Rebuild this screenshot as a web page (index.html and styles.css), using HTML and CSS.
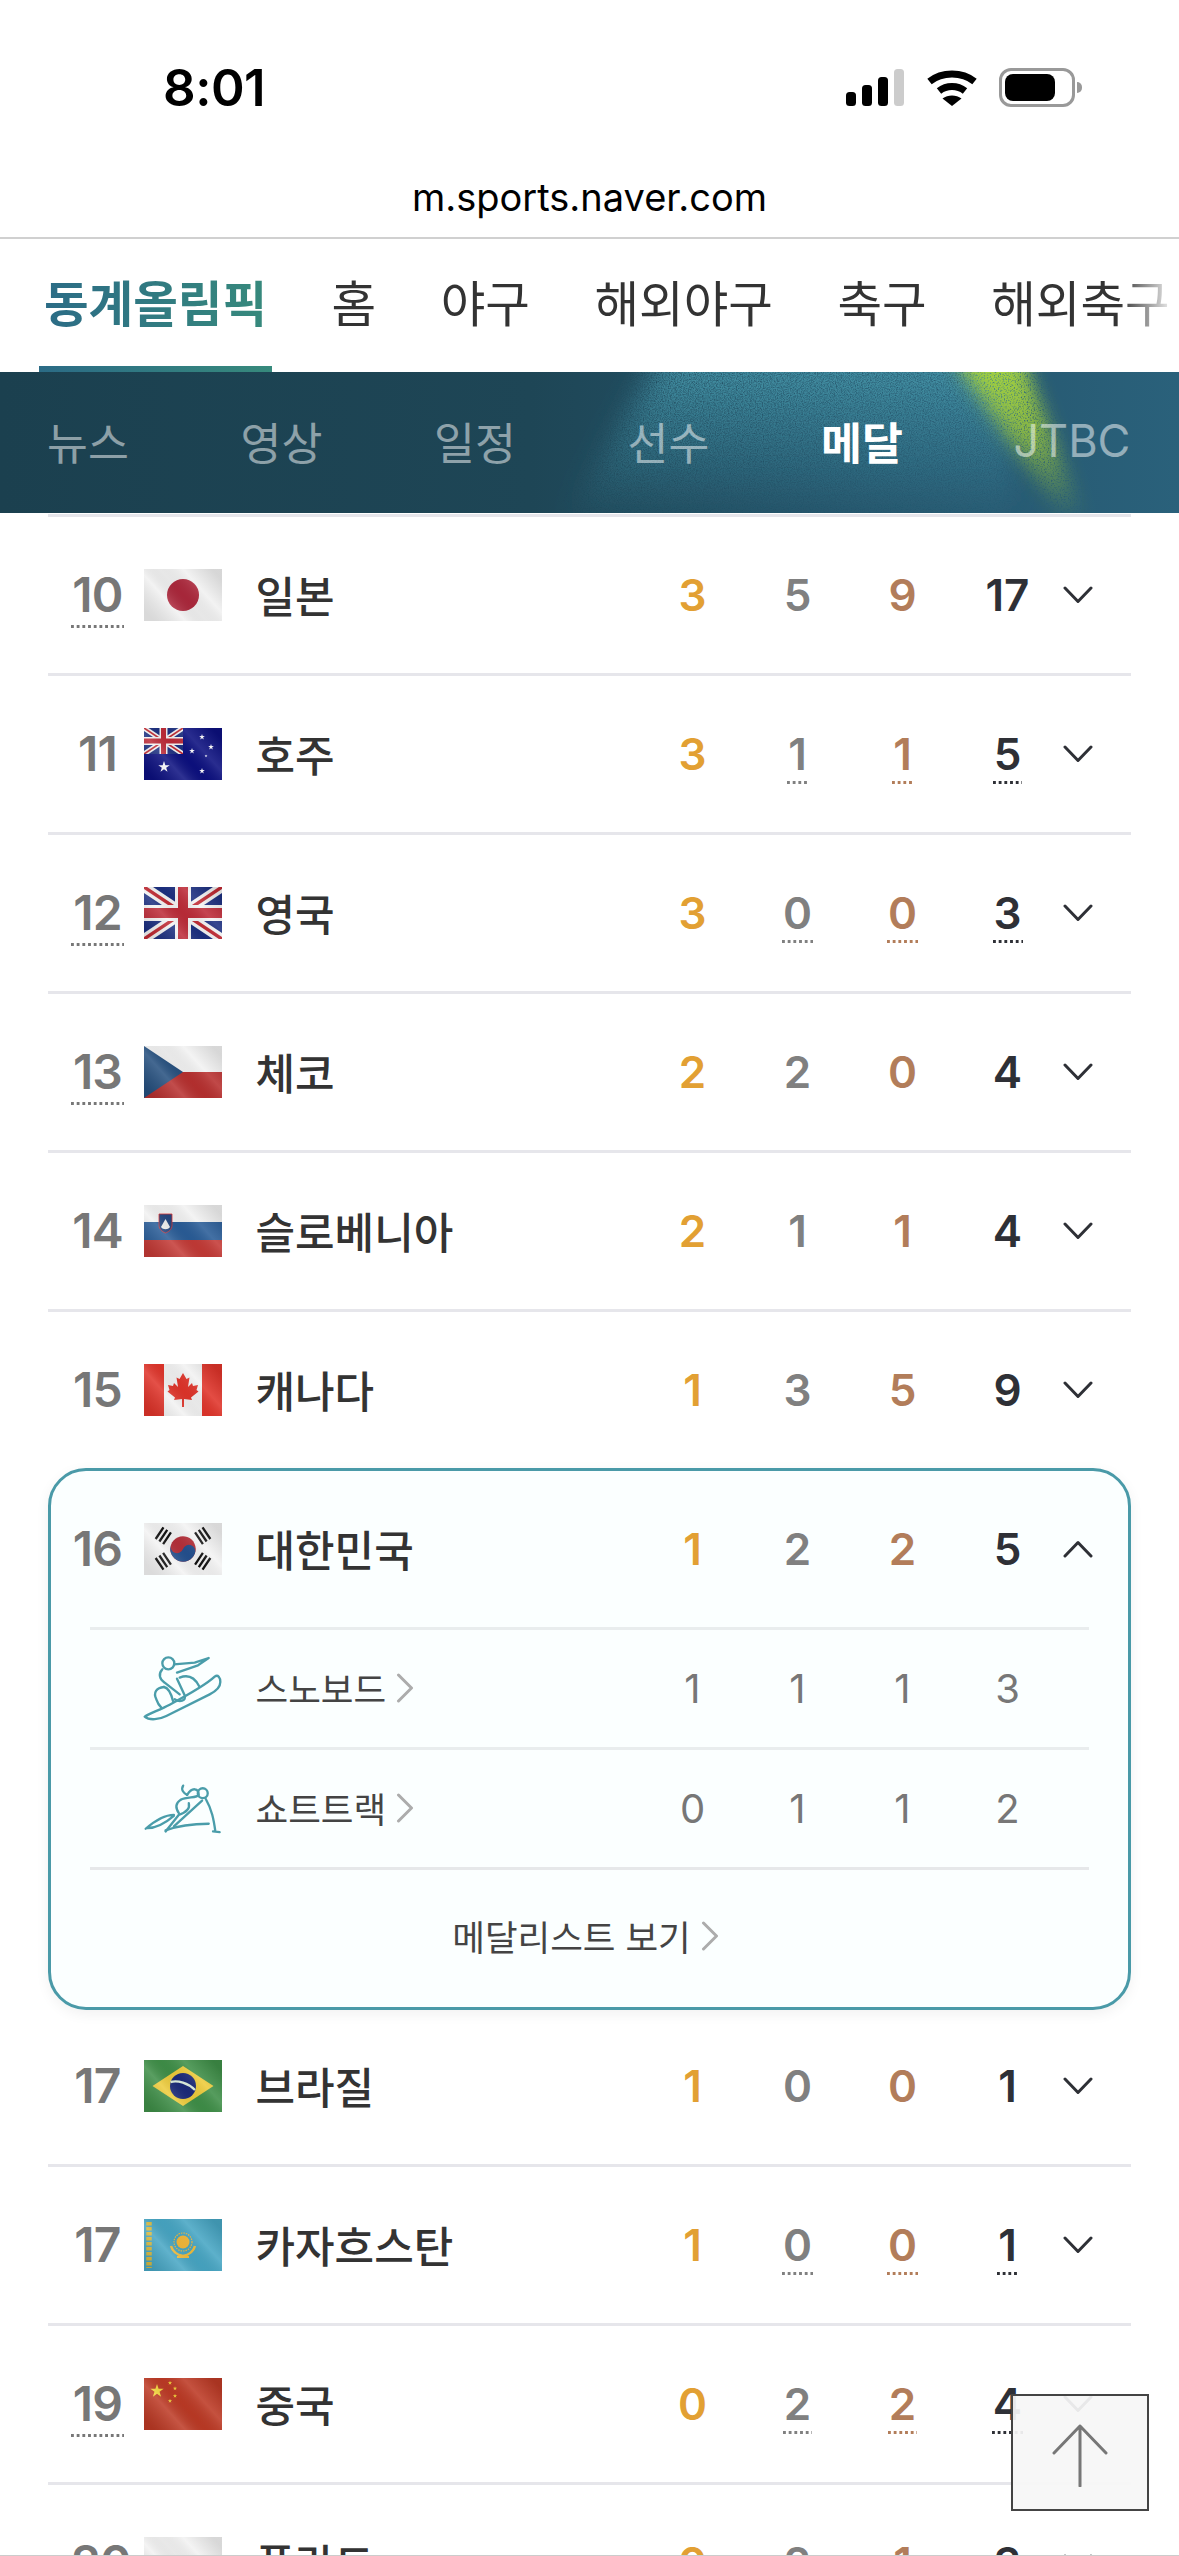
FILE: index.html
```html
<!DOCTYPE html>
<html lang="ko">
<head>
<meta charset="utf-8">
<title>동계올림픽 메달</title>
<link rel="stylesheet" href="styles.css">
</head>
<body>
<svg class="defs" aria-hidden="true">
  <defs>
    <linearGradient id="gloss" gradientUnits="userSpaceOnUse" x1="10" y1="52" x2="68" y2="0">
      <stop offset="0" stop-color="#000" stop-opacity=".1"/>
      <stop offset=".3" stop-color="#fff" stop-opacity=".14"/>
      <stop offset=".5" stop-color="#000" stop-opacity=".04"/>
      <stop offset=".72" stop-color="#fff" stop-opacity=".12"/>
      <stop offset="1" stop-color="#000" stop-opacity=".11"/>
    </linearGradient>
    <linearGradient id="tealBeam" x1="0" y1="0" x2="0" y2="1">
      <stop offset="0" stop-color="#4a9db0" stop-opacity=".95"/>
      <stop offset=".6" stop-color="#3f8ea3" stop-opacity=".45"/>
      <stop offset="1" stop-color="#3f8ea3" stop-opacity="0"/>
    </linearGradient>
    <linearGradient id="limeBeam" x1="0" y1="0" x2="0" y2="1">
      <stop offset="0" stop-color="#a9d63c"/>
      <stop offset=".5" stop-color="#9cc83a" stop-opacity=".8"/>
      <stop offset="1" stop-color="#8cb83a" stop-opacity="0"/>
    </linearGradient>
    <filter id="grainSoft" x="-20%" y="-20%" width="140%" height="140%">
      <feGaussianBlur in="SourceGraphic" stdDeviation="14" result="soft"/>
      <feTurbulence type="fractalNoise" baseFrequency=".85" numOctaves="2" seed="4"/>
      <feColorMatrix type="matrix" values="0 0 0 0 0  0 0 0 0 0  0 0 0 0 0  1.8 0 0 0 -.15" result="noise"/>
      <feComposite in="soft" in2="noise" operator="in"/>
    </filter>
    <filter id="grainLime" x="-30%" y="-20%" width="160%" height="140%">
      <feGaussianBlur in="SourceGraphic" stdDeviation="9" result="soft"/>
      <feTurbulence type="fractalNoise" baseFrequency=".7" numOctaves="2" seed="9"/>
      <feColorMatrix type="matrix" values="0 0 0 0 0  0 0 0 0 0  0 0 0 0 0  2.400 0 0 0 -.25" result="noise"/>
      <feComposite in="soft" in2="noise" operator="in"/>
    </filter>
    <polygon id="star" points="0,-1 .225,-.309 .951,-.309 .363,.118 .588,.809 0,.382 -.588,.809 -.363,.118 -.951,-.309 -.225,-.309"/>
    <symbol id="jack" viewBox="0 0 78 52">
      <rect width="78" height="52" fill="#1c2f80"/>
      <path d="M0 0L78 52M78 0L0 52" stroke="#f4f4f4" stroke-width="10"/>
      <path d="M0 0L78 52M78 0L0 52" stroke="#c12a33" stroke-width="3.4"/>
      <path d="M39 0V52M0 26H78" stroke="#f4f4f4" stroke-width="16"/>
      <path d="M39 0V52M0 26H78" stroke="#bd2b38" stroke-width="10"/>
    </symbol>
    <symbol id="chevDown" viewBox="0 0 30 18">
      <path d="M2 2L15 15.500L28 2" fill="none" stroke="#2e3036" stroke-width="3" stroke-linecap="round" stroke-linejoin="round"/>
    </symbol>
    <symbol id="chevRight" viewBox="0 0 18 30">
      <path d="M2.500 2L15.500 15L2.500 28" fill="none" stroke="#acacac" stroke-width="3" stroke-linecap="round" stroke-linejoin="round"/>
    </symbol>
  </defs>
</svg>

<div class="page">
  <header class="status">
    <span class="time">8:01</span>
    <div class="status-icons">
      <svg class="signal" viewBox="0 0 58 37" aria-hidden="true">
        <rect x="0" y="23" width="10" height="14" rx="3.500" fill="#000"/>
        <rect x="16" y="16" width="10" height="21" rx="3.500" fill="#000"/>
        <rect x="32" y="8" width="10" height="29" rx="3.500" fill="#000"/>
        <rect x="48" y="0" width="10" height="37" rx="3.500" fill="#ccc"/>
      </svg>
      <svg class="wifi" viewBox="0 0 52 37" aria-hidden="true">
        <path d="M3.500 12.500C16 2.500 36 2.500 48.500 12.500" fill="none" stroke="#000" stroke-width="7"/>
        <path d="M13 22C20.500 16 31.500 16 39 22" fill="none" stroke="#000" stroke-width="7"/>
        <path d="M26 37L16.500 29.500C22 25.500 30 25.500 35.500 29.500Z" fill="#000"/>
      </svg>
      <div class="battery"><span class="battery-level"></span></div>
      <span class="battery-nub"></span>
    </div>
  </header>
  <div class="url">m.sports.naver.com</div>

  <nav class="gnb">
    <a class="gnb-item on">동계올림픽</a>
    <a class="gnb-item">홈</a>
    <a class="gnb-item">야구</a>
    <a class="gnb-item">해외야구</a>
    <a class="gnb-item">축구</a>
    <a class="gnb-item">해외축구</a>
  </nav>

  <nav class="band">
    <svg class="band-art" viewBox="0 0 1179 141" preserveAspectRatio="none" aria-hidden="true">
      <polygon points="665,-20 565,150 1010,150 1020,-20" fill="url(#tealBeam)" filter="url(#grainSoft)"/>
      <polygon points="950,-20 1020,-20 1085,150 1065,150" fill="url(#limeBeam)" filter="url(#grainLime)"/>
    </svg>
    <a class="band-item">뉴스</a>
    <a class="band-item">영상</a>
    <a class="band-item">일정</a>
    <a class="band-item">선수</a>
    <a class="band-item on">메달</a>
    <a class="band-item latin">JTBC</a>
  </nav>

  <main class="list">
    <div class="row">
      <span class="rank dot">10</span>
      <svg class="flag" viewBox="0 0 78 52" aria-hidden="true"><rect width="78" height="52" fill="#f1f1f1"/><circle cx="39" cy="26" r="16" fill="#ad283c"/><rect width="78" height="52" fill="url(#gloss)"/></svg>
      <span class="name">일본</span>
      <span class="v gold">3</span><span class="v silver">5</span><span class="v bronze">9</span><span class="v total">17</span>
      <svg class="chev" aria-hidden="true"><use href="#chevDown"/></svg>
    </div>
    <div class="row">
      <span class="rank">11</span>
      <svg class="flag" viewBox="0 0 78 52" aria-hidden="true"><rect width="78" height="52" fill="#0c1080"/><use href="#jack" width="39" height="26"/><g fill="#fff"><use href="#star" transform="translate(58 9) scale(3)"/><use href="#star" transform="translate(67 19) scale(3)"/><use href="#star" transform="translate(48 23) scale(3)"/><use href="#star" transform="translate(62 28) scale(1.500)"/><use href="#star" transform="translate(58 43) scale(3)"/><use href="#star" transform="translate(20 39) scale(6)"/></g><rect width="78" height="52" fill="url(#gloss)"/></svg>
      <span class="name">호주</span>
      <span class="v gold">3</span><span class="v silver dot">1</span><span class="v bronze dot">1</span><span class="v total dot">5</span>
      <svg class="chev" aria-hidden="true"><use href="#chevDown"/></svg>
    </div>
    <div class="row">
      <span class="rank dot">12</span>
      <svg class="flag" viewBox="0 0 78 52" aria-hidden="true"><use href="#jack" width="78" height="52"/><rect width="78" height="52" fill="url(#gloss)"/></svg>
      <span class="name">영국</span>
      <span class="v gold">3</span><span class="v silver dot">0</span><span class="v bronze dot">0</span><span class="v total dot">3</span>
      <svg class="chev" aria-hidden="true"><use href="#chevDown"/></svg>
    </div>
    <div class="row">
      <span class="rank dot">13</span>
      <svg class="flag" viewBox="0 0 78 52" aria-hidden="true"><rect width="78" height="26" fill="#f2f2f2"/><rect y="26" width="78" height="26" fill="#b8302f"/><polygon points="0,0 39,26 0,52" fill="#26507f"/><rect width="78" height="52" fill="url(#gloss)"/></svg>
      <span class="name">체코</span>
      <span class="v gold">2</span><span class="v silver">2</span><span class="v bronze">0</span><span class="v total">4</span>
      <svg class="chev" aria-hidden="true"><use href="#chevDown"/></svg>
    </div>
    <div class="row">
      <span class="rank">14</span>
      <svg class="flag" viewBox="0 0 78 52" aria-hidden="true"><rect width="78" height="17" fill="#f2f2f2"/><rect y="17" width="78" height="18" fill="#2a5d98"/><rect y="35" width="78" height="17" fill="#c43a36"/><path d="M15 9H28V20C28 25 24 27 21.500 28C19 27 15 25 15 20Z" fill="#24467f" stroke="#d33" stroke-width=".8"/><path d="M17 22L21.500 14L26 22C24 25 19 25 17 22Z" fill="#eee"/><rect width="78" height="52" fill="url(#gloss)"/></svg>
      <span class="name">슬로베니아</span>
      <span class="v gold">2</span><span class="v silver">1</span><span class="v bronze">1</span><span class="v total">4</span>
      <svg class="chev" aria-hidden="true"><use href="#chevDown"/></svg>
    </div>
    <div class="row row-end">
      <span class="rank">15</span>
      <svg class="flag" viewBox="0 0 78 52" aria-hidden="true"><rect width="78" height="52" fill="#f2f2f2"/><rect width="20" height="52" fill="#e0342a"/><rect x="58" width="20" height="52" fill="#e0342a"/><polygon fill="#e0342a" points="39,9 42.500,15 45.500,13.500 44,23 48,19 49,22 54,21 52.500,26 54.500,27.500 47,33.500 48,36 40,35 40,43 38,43 38,35 30,36 31,33.500 23.500,27.500 25.500,26 24,21 29,22 30,19 34,23 32.500,13.500 35.500,15"/><rect width="78" height="52" fill="url(#gloss)"/></svg>
      <span class="name">캐나다</span>
      <span class="v gold">1</span><span class="v silver">3</span><span class="v bronze">5</span><span class="v total">9</span>
      <svg class="chev" aria-hidden="true"><use href="#chevDown"/></svg>
    </div>

    <section class="card">
      <div class="row row-open">
        <span class="rank">16</span>
        <svg class="flag" viewBox="0 0 78 52" aria-hidden="true"><rect width="78" height="52" fill="#f3f3f3"/><g transform="translate(39 26) rotate(20)"><circle r="12.700" fill="#b5303a"/><path d="M-12.700 0A6.350 6.350 0 0 0 0 0A6.350 6.350 0 0 1 12.700 0A12.700 12.700 0 0 1 -12.700 0Z" fill="#24508f"/></g><g fill="none" stroke="#111" stroke-width="2.300"><path d="M-7 -4.500H7M-7 0H7M-7 4.500H7" transform="translate(19.300 12.700) rotate(-56)"/><path d="M-7 -4.500H7M-7 0H7M-7 4.500H7" transform="translate(58.700 12.700) rotate(56)"/><path d="M-7 -4.500H7M-7 0H7M-7 4.500H7" transform="translate(19.300 38.300) rotate(56)"/><path d="M-7 -4.500H7M-7 0H7M-7 4.500H7" transform="translate(58.700 38.300) rotate(-56)"/></g><rect width="78" height="52" fill="url(#gloss)"/></svg>
        <span class="name">대한민국</span>
        <span class="v gold">1</span><span class="v silver">2</span><span class="v bronze">2</span><span class="v total">5</span>
        <svg class="chev chev-up" aria-hidden="true"><use href="#chevDown"/></svg>
      </div>
      <div class="sub-list">
        <div class="sub-row">
          <svg class="sport" viewBox="40 50 240 195" aria-hidden="true">
            <g fill="none" stroke="#4a9daa" stroke-width="7" stroke-linecap="round" stroke-linejoin="round">
              <path d="M45 232C60 222 90 212 120 196C165 172 225 140 255 112C265 104 272 115 272 128C272 145 260 155 240 165L110 230C90 240 60 245 45 232Z"/>
              <circle cx="116" cy="72" r="18"/>
              <path d="M133 75L195 70L237 56L205 78L142 100"/>
              <path d="M98 90C85 105 90 120 105 130L150 165"/>
              <path d="M103 143C80 145 70 160 80 180C85 195 90 200 95 205"/>
              <path d="M103 143C115 145 125 165 130 185"/>
              <path d="M150 115C175 105 195 115 208 140"/>
              <path d="M142 118L165 168C170 185 150 190 135 180"/>
            </g>
          </svg>
          <a class="sub-name">스노보드<svg class="more" aria-hidden="true"><use href="#chevRight"/></svg></a>
          <span class="sv">1</span><span class="sv">1</span><span class="sv">1</span><span class="sv">3</span>
        </div>
        <div class="sub-row">
          <svg class="sport sport-short" viewBox="40 430 235 155" aria-hidden="true">
            <g fill="none" stroke="#4a9daa" stroke-width="7" stroke-linecap="round" stroke-linejoin="round">
              <path d="M158 437C150 450 160 460 170 465"/>
              <circle cx="217" cy="460" r="15"/>
              <path d="M170 465C185 440 205 445 205 465C200 475 170 470 150 480C135 490 135 505 145 520"/>
              <path d="M175 490C180 510 160 520 145 525L105 575"/>
              <path d="M215 482L130 560"/>
              <path d="M105 572C150 555 190 552 235 552"/>
              <path d="M225 475C245 510 250 540 255 575M248 575L268 577"/>
              <path d="M45 567C70 545 100 525 130 525M50 565C80 565 110 545 130 528"/>
            </g>
          </svg>
          <a class="sub-name">쇼트트랙<svg class="more" aria-hidden="true"><use href="#chevRight"/></svg></a>
          <span class="sv">0</span><span class="sv">1</span><span class="sv">1</span><span class="sv">2</span>
        </div>
      </div>
      <a class="card-foot">메달리스트 보기<svg class="more" aria-hidden="true"><use href="#chevRight"/></svg></a>
    </section>

    <div class="row row-after">
      <span class="rank">17</span>
      <svg class="flag" viewBox="0 0 78 52" aria-hidden="true"><rect width="78" height="52" fill="#3f8f48"/><polygon points="8.500,26 39,6 69.500,26 39,46" fill="#edcb3a"/><circle cx="39" cy="26" r="13" fill="#1b2a7a"/><path d="M26.500 22C34 20 44 23 51 30" fill="none" stroke="#dff0e0" stroke-width="2.400"/><rect width="78" height="52" fill="url(#gloss)"/></svg>
      <span class="name">브라질</span>
      <span class="v gold">1</span><span class="v silver">0</span><span class="v bronze">0</span><span class="v total">1</span>
      <svg class="chev" aria-hidden="true"><use href="#chevDown"/></svg>
    </div>
    <div class="row">
      <span class="rank">17</span>
      <svg class="flag" viewBox="0 0 78 52" aria-hidden="true"><rect width="78" height="52" fill="#47a6c4"/><path d="M5 3V49" stroke="#d8b93e" stroke-width="5.500" stroke-dasharray="3.500 1.500"/><circle cx="39" cy="23" r="6.500" fill="#f2b83a"/><circle cx="39" cy="23" r="9" fill="none" stroke="#f2b83a" stroke-width="1.200" stroke-dasharray="1.500 1"/><path d="M27 27C29 34 34 36 39 37C44 36 49 34 51 27" fill="none" stroke="#f0bc3c" stroke-width="2.500"/><path d="M33 38H45" stroke="#f0bc3c" stroke-width="2"/><rect width="78" height="52" fill="url(#gloss)"/></svg>
      <span class="name">카자흐스탄</span>
      <span class="v gold">1</span><span class="v silver dot">0</span><span class="v bronze dot">0</span><span class="v total dot">1</span>
      <svg class="chev" aria-hidden="true"><use href="#chevDown"/></svg>
    </div>
    <div class="row">
      <span class="rank dot">19</span>
      <svg class="flag" viewBox="0 0 78 52" aria-hidden="true"><rect width="78" height="52" fill="#bd3a25"/><g fill="#f3d63c"><use href="#star" transform="translate(13 13) scale(7)"/><use href="#star" transform="translate(26 5) scale(2.200)"/><use href="#star" transform="translate(31 10.500) scale(2.200)"/><use href="#star" transform="translate(31 18) scale(2.200)"/><use href="#star" transform="translate(26 23) scale(2.200)"/></g><rect width="78" height="52" fill="url(#gloss)"/></svg>
      <span class="name">중국</span>
      <span class="v gold">0</span><span class="v silver dot">2</span><span class="v bronze dot">2</span><span class="v total dot">4</span>
      <svg class="chev" aria-hidden="true"><use href="#chevDown"/></svg>
    </div>
    <div class="row">
      <span class="rank dot">20</span>
      <svg class="flag" viewBox="0 0 78 52" aria-hidden="true"><rect width="78" height="26" fill="#f2f2f2"/><rect y="26" width="78" height="26" fill="#c43a40"/><rect width="78" height="52" fill="url(#gloss)"/></svg>
      <span class="name">폴란드</span>
      <span class="v gold">0</span><span class="v silver">2</span><span class="v bronze">1</span><span class="v total">3</span>
      <svg class="chev" aria-hidden="true"><use href="#chevDown"/></svg>
    </div>
  </main>

  <a class="top-btn" aria-label="맨 위로">
    <svg viewBox="0 0 56 64" aria-hidden="true"><path d="M28 3V63M2 30L28 3L54 30" fill="none" stroke="#777" stroke-width="3" stroke-linecap="round" stroke-linejoin="round"/></svg>
  </a>
  <div class="edge"></div>
</div>
</body>
</html>
```
FILE: styles.css
```css
* { box-sizing: border-box; }
html, body { margin: 0; padding: 0; background: #fff; }
body { font-family: "Noto Sans CJK KR", "Noto Sans", sans-serif; color: #333; }
a { color: inherit; text-decoration: none; }
.defs { position: absolute; width: 0; height: 0; }
.page { position: relative; width: 1179px; height: 2556px; overflow: hidden; background: #fff; }

/* status bar */
.status { height: 125px; padding: 0 97px 0 163px; display: flex; justify-content: space-between; align-items: flex-start; }
.time { margin-top: 58px; font: 600 51px/60px Inter, sans-serif; color: #000; letter-spacing: -.5px; }
.status-icons { margin-top: 68px; height: 39px; display: flex; align-items: center; }
.signal { width: 58px; height: 37px; margin-left: 0; }
.wifi { width: 52px; height: 37px; margin-left: 22px; }
.battery { width: 76px; height: 39px; margin-left: 21px; border: 3px solid #999; border-radius: 12px; padding: 3px; }
.battery-level { display: block; width: 50px; height: 27px; background: #000; border-radius: 8px; }
.battery-nub { width: 5px; height: 11px; margin-left: 2px; background: #999; border-radius: 0 6px 6px 0; }
.url { height: 114px; padding-top: 48px; text-align: center; font: 400 38px/48px Inter, sans-serif; color: #000; border-bottom: 2px solid #d0d0d0; }

/* main nav */
.gnb { position: relative; height: 133px; padding: 0 0 0 39px; display: flex; gap: 54.500px; white-space: nowrap; overflow: hidden; font-size: 48.500px; }
.gnb::after { content: ""; position: absolute; top: 0; right: 0; bottom: 0; width: 60px; background: linear-gradient(90deg, rgba(255,255,255,0), #fff 95%); }
.gnb-item { padding: 0 5px; line-height: 125px; color: #333; flex: none; }
.gnb-item.on { padding: 0 5px; font-weight: 700; position: relative; color: transparent; background-image: linear-gradient(90deg, #2b6b86, #378a7c); -webkit-background-clip: text; background-clip: text; }
.gnb-item.on::after { content: ""; position: absolute; left: 0; right: 0; bottom: 0; height: 6px; background: linear-gradient(90deg, #2b6b86, #378a7c); }

/* band */
.band { position: relative; height: 141px; padding: 0 0 3px 47px; display: flex; gap: 111.600px; align-items: center; overflow: hidden; background: linear-gradient(90deg, #1b404f 0%, #1e4656 45%, #245369 70%, #2a617b 100%); font-size: 44.500px; white-space: nowrap; }
.band-art { position: absolute; left: 0; top: 0; width: 100%; height: 100%; }
.band-item { position: relative; flex: none; color: rgba(255,255,255,.5); line-height: 60px; }
.band-item.on { color: #fff; font-weight: 700; }
.band-item.latin { font-family: Inter, sans-serif; font-size: 45px; margin-left: -1px; }

/* rows */
.list { margin-top: 1px; margin-left: 48px; width: 1083px; border-top: 3px solid #e6e6eb; }
.row { height: 159px; padding: 0 36px 0 14px; border-bottom: 3px solid #e6e6eb; display: grid; grid-template-columns: 82px 78px minmax(0, 1fr) repeat(4, 105px) 35px; align-items: center; justify-items: center; }
.row-end { height: 156px; border-bottom: 0; }
.row-after { position: relative; margin-top: -2px; }
.rank { width: 71px; justify-self: start; text-align: center; font: 600 48px/48px Inter, sans-serif; color: #777; letter-spacing: -.8px; }
.rank.dot { width: 53px; margin-left: 9px; padding: 9px 0; }
.flag { display: block; width: 78px; height: 52px; }
.name { justify-self: start; padding: 0 0 3px 33.500px; font-size: 43px; font-weight: 500; line-height: 60px; color: #333; white-space: nowrap; }
.v { font: 600 44px/44px Inter, sans-serif; }
.dot { padding: 8px 1px; background-image: linear-gradient(90deg, currentColor 3px, transparent 3px); background-size: 5.700px 3px; background-position: left bottom; background-repeat: repeat-x; }
.gold { color: #e2a033; }
.silver { color: #808080; }
.bronze { color: #b27d5a; }
.total { color: #2e3036; }
.chev { display: block; width: 30px; height: 18px; }
.chev-up { transform: rotate(180deg); }

/* expanded card */
.card { position: relative; z-index: 1; height: 542px; margin-top: 0; background: #fbffff; border: 3px solid #4a9aa8; border-radius: 38px; box-shadow: 0 4px 14px rgba(0,0,0,.06); }
.row-open { height: 156px; padding: 0 33px 0 11px; border-bottom: 0; }
.sub-list { margin: 0 39px; }
.sub-row { height: 120px; padding: 0 29px 0 54px; border-top: 3px solid #e9edee; display: grid; grid-template-columns: 78px minmax(0, 1fr) repeat(4, 105px); align-items: center; justify-items: center; }
.sport { display: block; width: 80px; height: 65px; }
.sport-short { width: 78px; height: 52px; }
.sub-name { justify-self: start; display: flex; align-items: center; padding: 0 0 2px 33.500px; font-size: 35.500px; line-height: 50px; color: #444; white-space: nowrap; }
.more { display: block; flex: none; width: 18px; height: 30px; margin-left: 10px; }
.sv { font: 400 40px/44px Inter, sans-serif; color: #777; }
.card-foot { display: flex; justify-content: center; align-items: center; height: 137px; margin: 0 39px; padding: 0 8px 3px 0; border-top: 3px solid #e6e8ea; font-size: 35.500px; line-height: 50px; color: #444; }

/* overlays */
.top-btn { position: absolute; left: 1011px; top: 2394px; width: 138px; height: 117px; display: flex; justify-content: center; padding-top: 27px; background: rgba(246,246,246,.93); border: 2px solid #444; }
.top-btn svg { display: block; width: 56px; height: 64px; }
.edge { position: absolute; left: 0; right: 0; bottom: 0; height: 1px; background: #ccc; }
```
